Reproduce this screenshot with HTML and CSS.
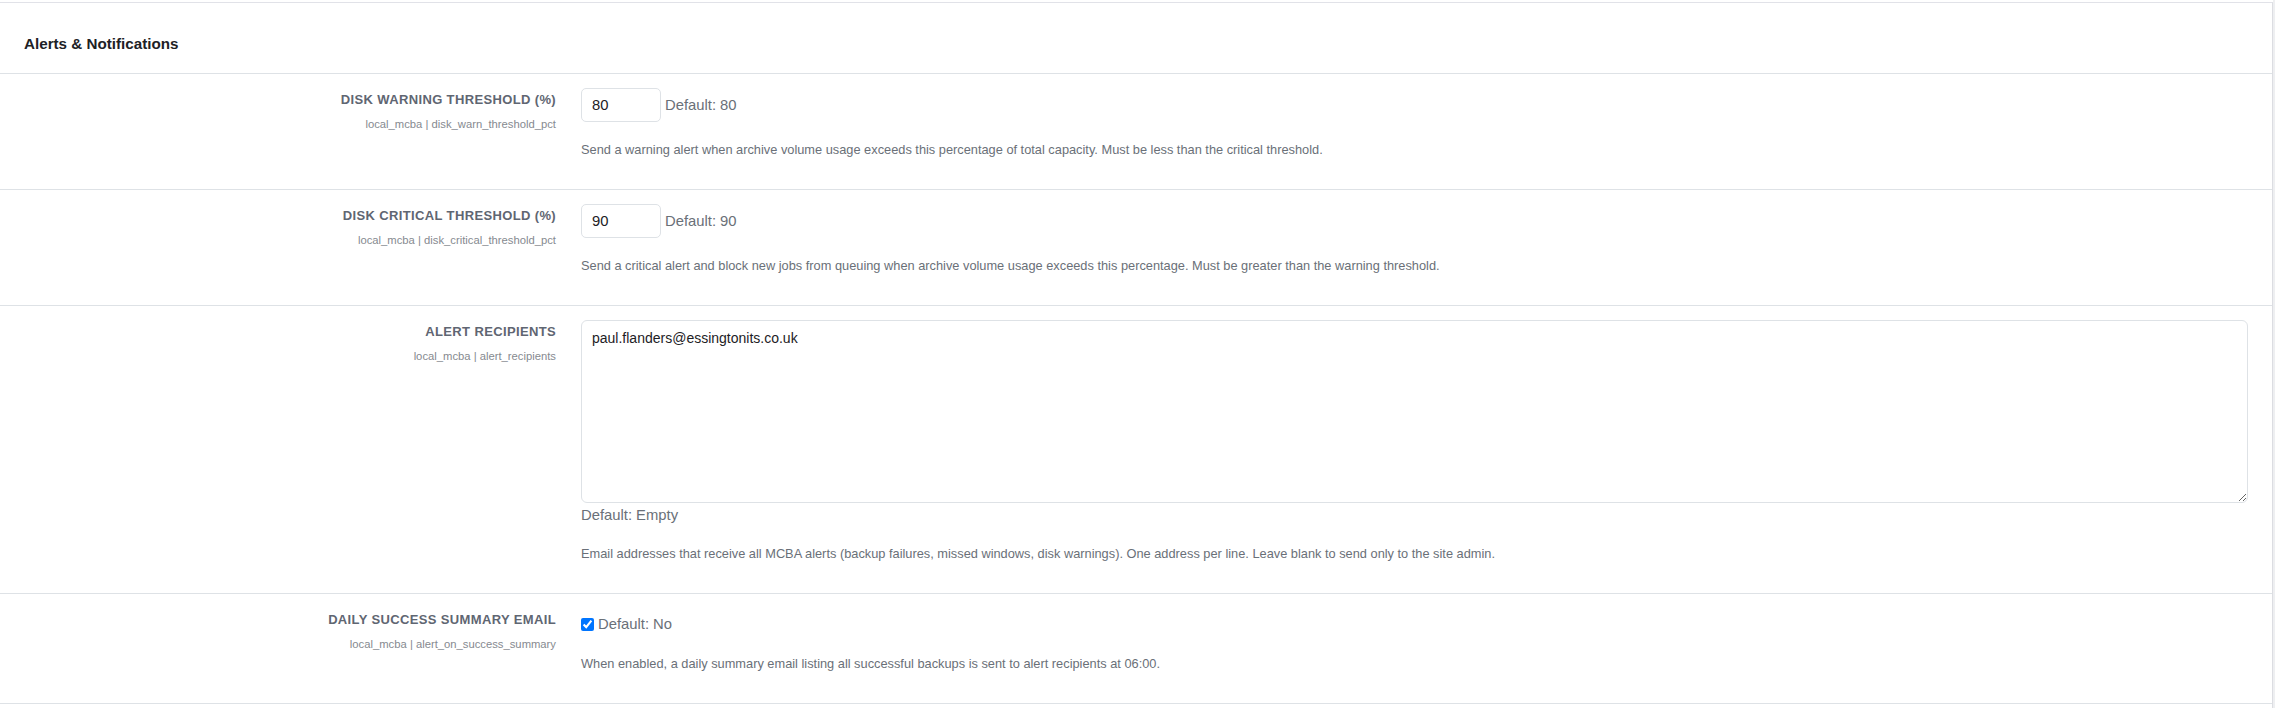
FILE: index.html
```html
<!DOCTYPE html>
<html lang="en">
<head>
<meta charset="utf-8">
<title>Alerts &amp; Notifications</title>
<link rel="stylesheet" href="styles.css">
</head>
<body>
<div class="page">
  <section class="card">
    <header class="card-head">
      <h3 class="card-title">Alerts &amp; Notifications</h3>
    </header>

    <div class="setting">
      <div class="setting-label">
        <div class="label-name">DISK WARNING THRESHOLD (%)</div>
        <div class="label-key">local_mcba | disk_warn_threshold_pct</div>
      </div>
      <div class="setting-body">
        <div class="control-line">
          <input class="num-input" type="text" value="80">
          <span class="default-info">Default: 80</span>
        </div>
        <div class="setting-desc">Send a warning alert when archive volume usage exceeds this percentage of total capacity. Must be less than the critical threshold.</div>
      </div>
    </div>

    <div class="setting">
      <div class="setting-label">
        <div class="label-name">DISK CRITICAL THRESHOLD (%)</div>
        <div class="label-key">local_mcba | disk_critical_threshold_pct</div>
      </div>
      <div class="setting-body">
        <div class="control-line">
          <input class="num-input" type="text" value="90">
          <span class="default-info">Default: 90</span>
        </div>
        <div class="setting-desc">Send a critical alert and block new jobs from queuing when archive volume usage exceeds this percentage. Must be greater than the warning threshold.</div>
      </div>
    </div>

    <div class="setting">
      <div class="setting-label">
        <div class="label-name">ALERT RECIPIENTS</div>
        <div class="label-key">local_mcba | alert_recipients</div>
      </div>
      <div class="setting-body">
        <textarea class="text-area">paul.flanders@essingtonits.co.uk</textarea>
        <div class="default-info default-block">Default: Empty</div>
        <div class="setting-desc">Email addresses that receive all MCBA alerts (backup failures, missed windows, disk warnings). One address per line. Leave blank to send only to the site admin.</div>
      </div>
    </div>

    <div class="setting">
      <div class="setting-label">
        <div class="label-name">DAILY SUCCESS SUMMARY EMAIL</div>
        <div class="label-key">local_mcba | alert_on_success_summary</div>
      </div>
      <div class="setting-body">
        <label class="check-line">
          <input class="check" type="checkbox" checked>
          <span class="default-info">Default: No</span>
        </label>
        <div class="setting-desc">When enabled, a daily summary email listing all successful backups is sent to alert recipients at 06:00.</div>
      </div>
    </div>
  </section>
  <div class="gutter"></div>
</div>
</body>
</html>
```

FILE: styles.css
```css
html, body {
  margin: 0;
  padding: 0;
  background: #ffffff;
}

body {
  font-family: "Liberation Sans", Arial, sans-serif;
  color: #1d2125;
}

.page {
  display: flex;
  min-height: 100vh;
}

.card {
  flex: 1;
  margin-top: 2px;
  background: #ffffff;
  border-top: 1px solid #e1e2e8;
  border-right: 1px solid #dcdde2;
}

.gutter {
  width: 2px;
  background: #eeeff1;
}

.card-head {
  padding: 32px 24px 20px;
  border-bottom: 1px solid #dee2e6;
}

.card-title {
  margin: 0;
  font-size: 15.2px;
  line-height: 18px;
  font-weight: 700;
  color: #1d2125;
}

.setting {
  display: grid;
  grid-template-columns: 532px 1fr;
  column-gap: 25px;
  padding: 14px 24px 30.5px;
  border-bottom: 1px solid #dee2e6;
}

.setting-label {
  text-align: right;
  padding-top: 2px;
}

.label-name {
  font-size: 13px;
  line-height: 19.5px;
  font-weight: 700;
  letter-spacing: 0.36px;
  color: #5f6672;
}

.label-key {
  margin-top: 6px;
  font-size: 11.25px;
  line-height: 16.5px;
  color: #868a90;
}

.setting-body {
  min-width: 0;
}

.control-line {
  display: flex;
  align-items: center;
  gap: 4px;
}

.num-input {
  box-sizing: border-box;
  width: 80px;
  height: 34px;
  margin: 0;
  padding: 0 10px;
  border: 1px solid #dee2e6;
  border-radius: 5px;
  background: #ffffff;
  font-family: "Liberation Sans", Arial, sans-serif;
  font-size: 14.8px;
  color: #1d2125;
  outline: none;
}

.default-info {
  font-size: 14.8px;
  line-height: 22px;
  color: #6a7078;
}

.default-block {
  display: block;
  margin-top: 1px;
}

.text-area {
  display: block;
  box-sizing: border-box;
  width: 100%;
  height: 183px;
  margin: 0;
  padding: 7px 10px;
  border: 1px solid #dee2e6;
  border-radius: 6px;
  background: #ffffff;
  font-family: "Liberation Sans", Arial, sans-serif;
  font-size: 14px;
  line-height: 21px;
  color: #1d2125;
  outline: none;
}

.check-line {
  display: flex;
  align-items: center;
  gap: 4px;
  margin-top: 4px;
  height: 24px;
}

.check {
  width: 13px;
  height: 13px;
  margin: 0;
}

.setting-desc {
  margin-top: 17.5px;
  font-size: 12.8px;
  line-height: 19px;
  color: #6a7078;
}
```
